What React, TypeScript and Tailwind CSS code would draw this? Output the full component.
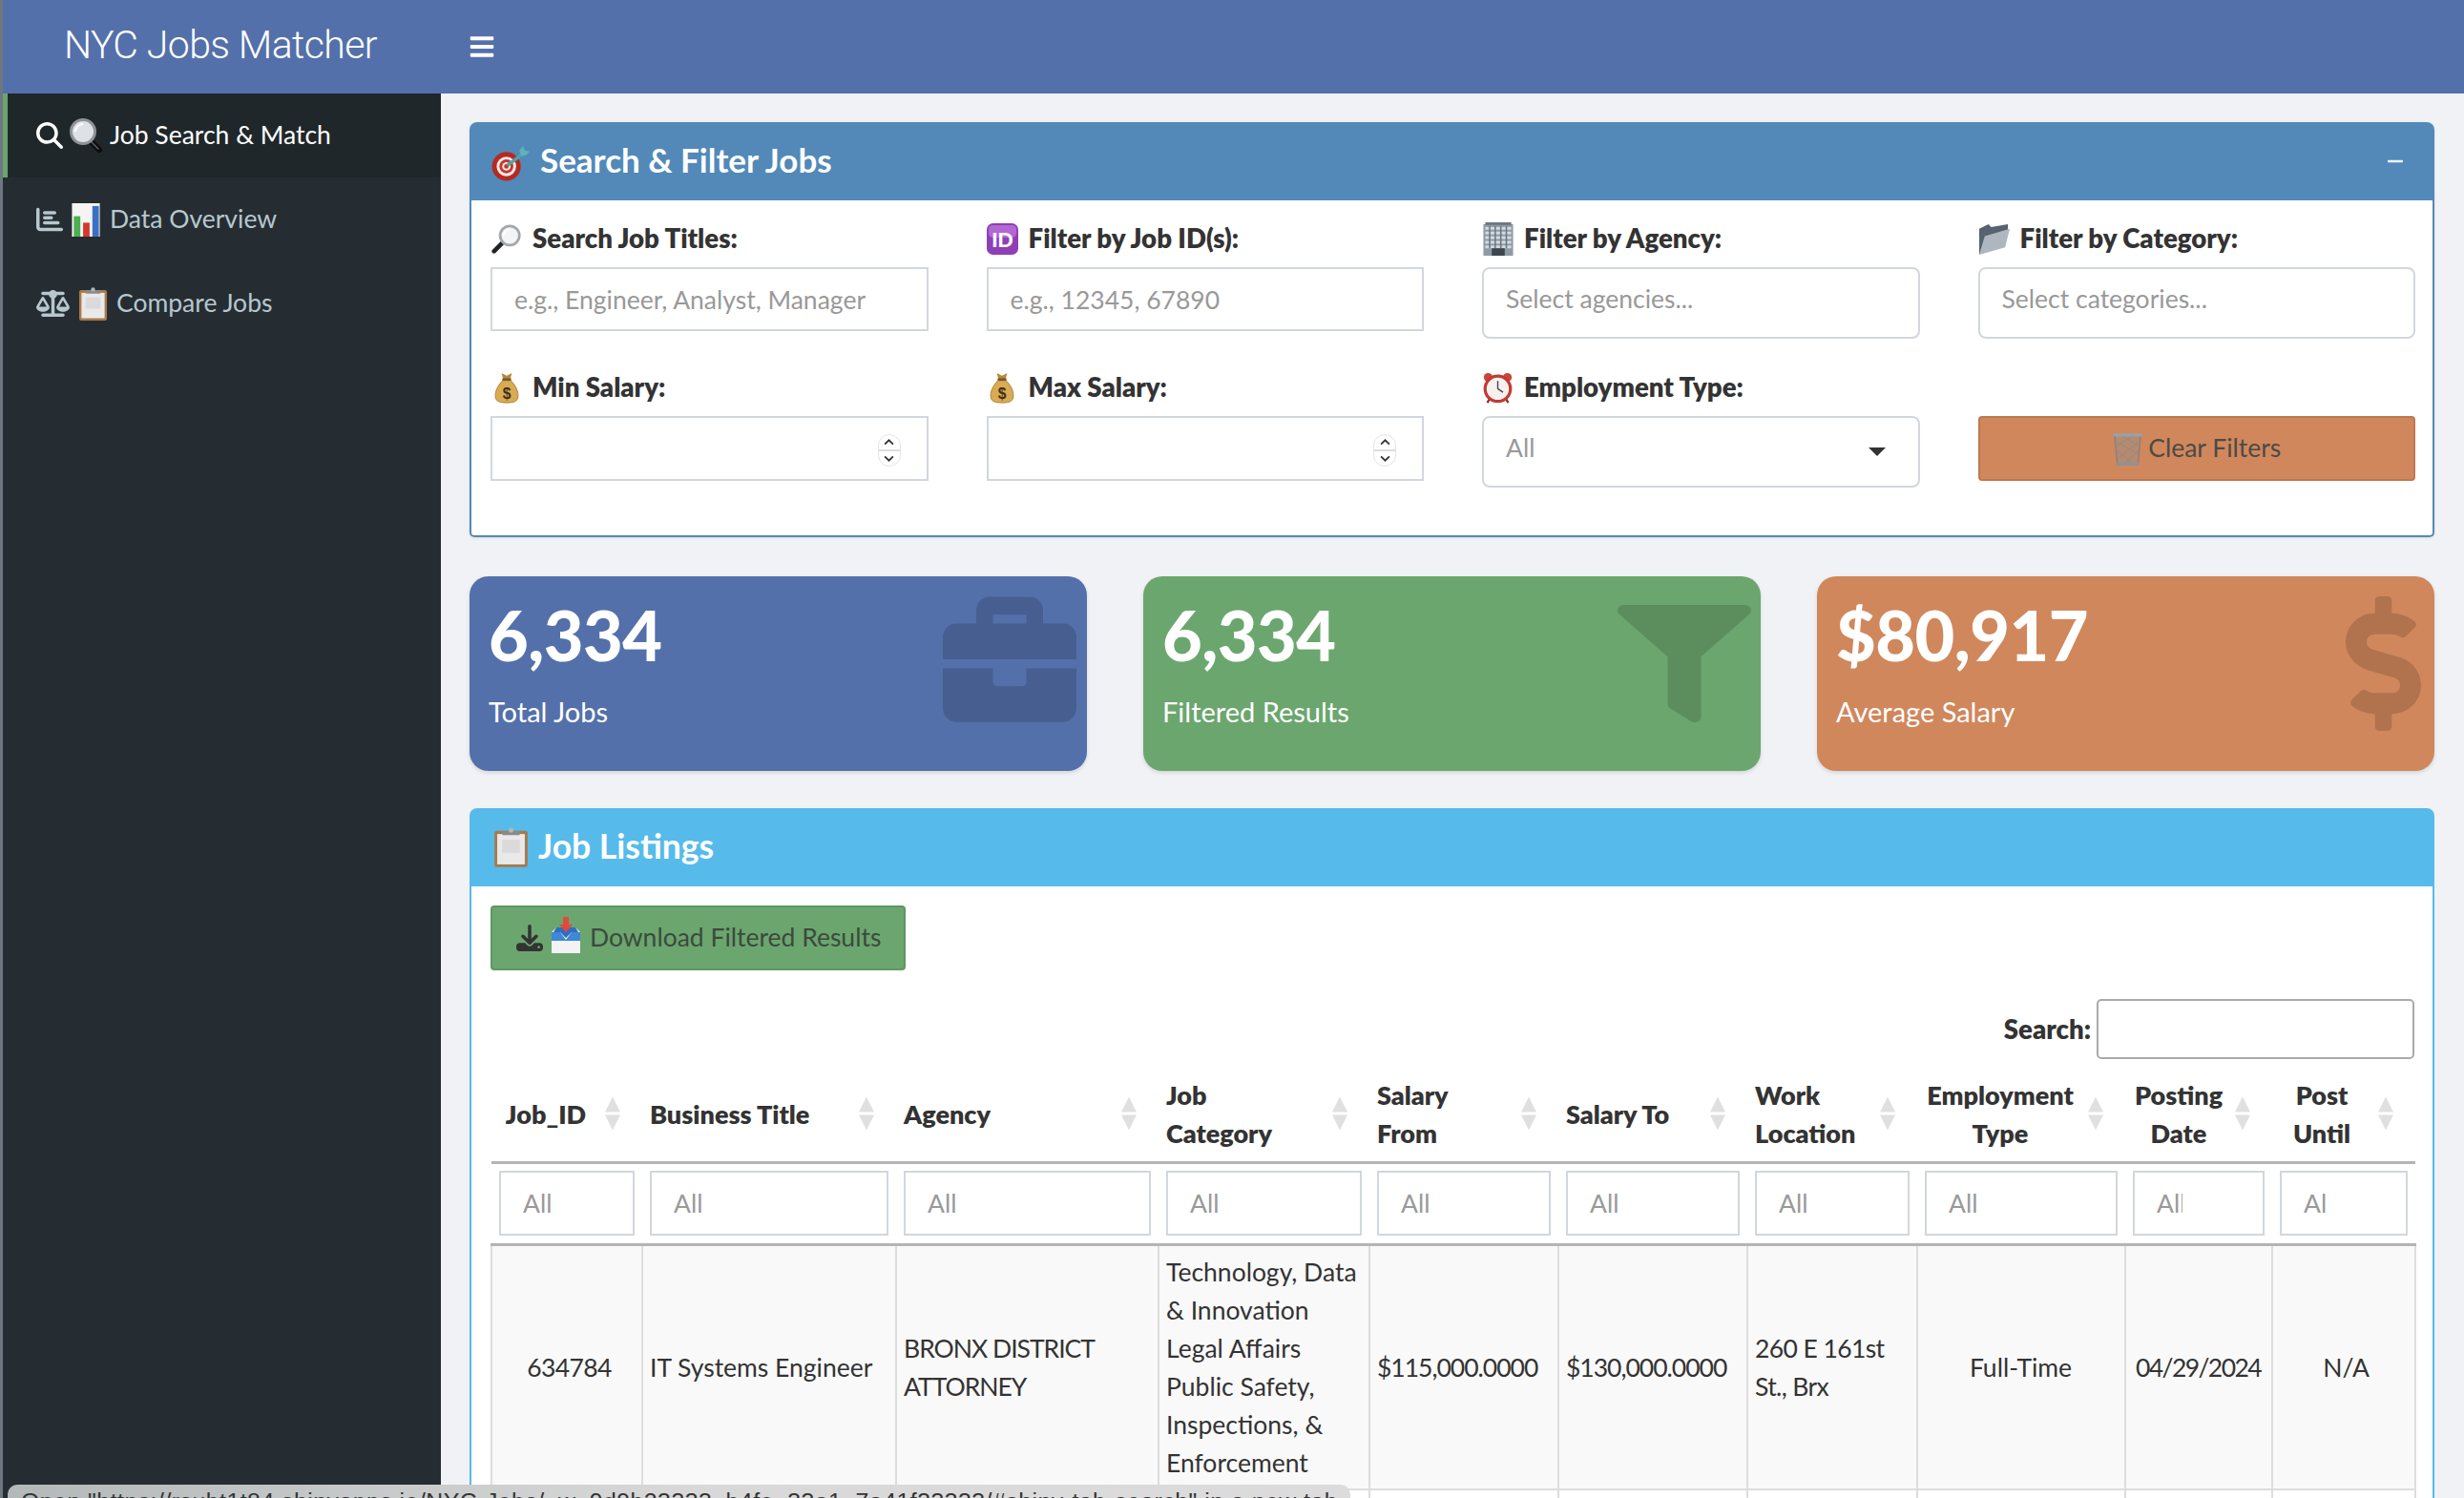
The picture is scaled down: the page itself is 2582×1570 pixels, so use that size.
import { ReactNode } from 'react';
import { FaBars, FaBriefcase, FaDollarSign, FaFilter } from 'react-icons/fa';
import { FaChartBar, FaDownload, FaMagnifyingGlass, FaMinus, FaScaleBalanced } from 'react-icons/fa6';

function GlassLeft({ className }: { className?: string }) {
  return (
    <svg viewBox="0 0 36 36" className={className}>
      <line x1="22" y1="23" x2="32" y2="33" stroke="#0c0c0c" strokeWidth="6" strokeLinecap="round" />
      <line x1="22" y1="23" x2="31" y2="32" stroke="#5b5f63" strokeWidth="1.5" strokeLinecap="round" />
      <circle cx="15" cy="14" r="12.5" fill="#dfe2e5" stroke="#8f9398" strokeWidth="3" />
      <path d="M7 14a8 8 0 0 1 8-8" stroke="#fff" strokeWidth="2" fill="none" />
    </svg>
  );
}

function GlassRight({ className }: { className?: string }) {
  return (
    <svg viewBox="0 0 36 36" className={className}>
      <line x1="14" y1="22" x2="4" y2="32" stroke="#222" strokeWidth="5" strokeLinecap="round" />
      <circle cx="22" cy="14" r="11" fill="#f2f4f6" stroke="#a4a8ad" strokeWidth="3" />
      <path d="M15 14a7 7 0 0 1 7-7" stroke="#fff" strokeWidth="2" fill="none" />
    </svg>
  );
}

function Bars({ className }: { className?: string }) {
  return (
    <svg viewBox="0 0 30 36" className={className}>
      <rect x="0" y="0" width="30" height="36" fill="#f4f4f4" />
      <rect x="2" y="14" width="7" height="22" fill="#4caf50" />
      <rect x="12" y="21" width="7" height="15" fill="#d23a2e" />
      <rect x="22" y="3" width="7" height="33" fill="#3b6fc4" />
    </svg>
  );
}

function Clipboard({ className }: { className?: string }) {
  return (
    <svg viewBox="0 0 32 36" className={className}>
      <rect x="1" y="3" width="30" height="33" rx="2" fill="#a9794a" />
      <rect x="3.5" y="6" width="25" height="27.5" fill="#e9e9e9" />
      <rect x="8" y="11" width="16" height="12" fill="#dadada" />
      <rect x="8" y="3" width="16" height="4" rx="1" fill="#8a8a8a" />
      <circle cx="16" cy="2.5" r="2.2" fill="#b5b5b5" />
    </svg>
  );
}

function Target({ className }: { className?: string }) {
  return (
    <svg viewBox="0 0 42 38" className={className}>
      <circle cx="16" cy="22" r="15.5" fill="#b52a22" />
      <circle cx="16" cy="22" r="10.5" fill="#f3ece6" />
      <circle cx="16" cy="22" r="7.5" fill="#c9352b" />
      <circle cx="16" cy="22" r="4.5" fill="#f3ece6" />
      <circle cx="16" cy="22" r="2.5" fill="#c9352b" />
      <line x1="17" y1="21" x2="34" y2="8" stroke="#4fa3a8" strokeWidth="3.5" />
      <path d="M30 5l4-5 2 5 5 1-4 4-5 1z" fill="#5cb4b8" />
    </svg>
  );
}

function IdBadge({ className }: { className?: string }) {
  return (
    <svg viewBox="0 0 35 35" className={className}>
      <rect x="0" y="0" width="35" height="35" rx="7" fill="#8e3fb5" />
      <rect x="2" y="2" width="31" height="14" rx="5" fill="#b268d4" />
      <text x="17.5" y="27" textAnchor="middle" fontFamily="Liberation Sans, sans-serif" fontSize="24" fill="#fff">ID</text>
    </svg>
  );
}

function Building({ className }: { className?: string }) {
  return (
    <svg viewBox="0 0 32 36" className={className}>
      <rect x="0" y="2" width="32" height="34" fill="#8e9ba6" />
      <rect x="2" y="0" width="28" height="3" fill="#6f7880" />
      {[5, 10, 15, 20, 25].map((y) => (
        <rect key={y} x="2" y={y} width="28" height="3" fill="#d2d9df" />
      ))}
      {[6, 12, 18, 24].map((x) => (
        <rect key={x} x={x} y="4" width="1.5" height="24" fill="#66737e" />
      ))}
      <rect x="9" y="28" width="14" height="8" fill="#3e464d" />
    </svg>
  );
}

function Folder({ className }: { className?: string }) {
  return (
    <svg viewBox="0 0 34 34" className={className}>
      <path d="M1 34V6l10-5 3 3 18-3v10z" fill="#56626f" />
      <path d="M1 34l6-20 27-8-5 20z" fill="#aeb7c0" />
    </svg>
  );
}

function MoneyBag({ className }: { className?: string }) {
  return (
    <svg viewBox="0 0 28 36" className={className}>
      <path d="M8 1l6 3 6-3-2 7h-8z" fill="#b8893c" />
      <path d="M10 9h8c5 5 9 11 9 18 0 6-4 8-13 8S1 33 1 27C1 20 5 14 10 9z" fill="#d9ab52" stroke="#a97c30" strokeWidth="1" />
      <rect x="9" y="7" width="10" height="3" fill="#7a5a24" />
      <text x="14" y="30" textAnchor="middle" fontFamily="Liberation Sans, sans-serif" fontWeight="700" fontSize="17" fill="#3c2f16">$</text>
    </svg>
  );
}

function AlarmClock({ className }: { className?: string }) {
  return (
    <svg viewBox="0 0 36 36" className={className}>
      <circle cx="7" cy="6" r="5" fill="#c9453c" />
      <circle cx="29" cy="6" r="5" fill="#c9453c" />
      <line x1="9" y1="30" x2="6" y2="35" stroke="#8c2f29" strokeWidth="2.5" />
      <line x1="27" y1="30" x2="30" y2="35" stroke="#8c2f29" strokeWidth="2.5" />
      <circle cx="18" cy="19" r="14.5" fill="#f6f1ee" stroke="#c23b32" strokeWidth="3.5" />
      <path d="M18 10v9l6 4" stroke="#444" strokeWidth="1.5" fill="none" />
    </svg>
  );
}

function Wastebasket({ className }: { className?: string }) {
  return (
    <svg viewBox="0 0 34 36" className={className}>
      <path d="M3 3h28l-3 32H6z" fill="#b78a6e" stroke="#87827e" strokeWidth="1.5" />
      <path d="M5 10l24 14M29 10L7 28M6 20l16 14M28 20L14 34M11 4l17 10M23 4L5 15" stroke="#8f8a86" strokeWidth="1" fill="none" />
      <rect x="1" y="1" width="32" height="3.5" rx="1.5" fill="#9aa0a6" />
      <rect x="5" y="33" width="24" height="3" rx="1" fill="#8d9398" />
    </svg>
  );
}

function Inbox({ className }: { className?: string }) {
  return (
    <svg viewBox="0 0 34 38" className={className}>
      <path d="M2 16l5-5h20l5 5v22H2z" fill="#f1f3f5" />
      <path d="M2 16h9l6 8 6-8h9v9H2z" fill="#3f87d8" />
      <path d="M7 11h20l3 5h-7l-6 6-6-6H4z" fill="#2f6fbd" />
      <path d="M14 0h6v8h4l-7 8-7-8h4z" fill="#e4483c" />
    </svg>
  );
}

function Label({ icon, text }: { icon: ReactNode; text: string }) {
  return (
    <div className="flex items-center gap-[11px] h-[36px] mb-[12px] font-extrabold text-[#333] text-[27.6px]">
      <span className="w-[33px] h-[36px] flex items-center justify-center">{icon}</span>
      <span>{text}</span>
    </div>
  );
}

function Spinner() {
  return (
    <div className="absolute right-[27px] top-[17px] w-[24px] h-[34px] rounded-full bg-white border border-[#e4e4e4] flex flex-col items-center justify-between py-[4px]">
      <svg viewBox="0 0 10 6" className="w-[11px] h-[7px]"><path d="M1 5l4-4 4 4" fill="none" stroke="#333" strokeWidth="1.6" /></svg>
      <div className="w-full h-[2px] bg-[#ddd]" />
      <svg viewBox="0 0 10 6" className="w-[11px] h-[7px]"><path d="M1 1l4 4 4-4" fill="none" stroke="#333" strokeWidth="1.6" /></svg>
    </div>
  );
}

function NumberField() {
  return (
    <div className="relative h-[68px] bg-white border-2 border-[#d2d6de]">
      <Spinner />
    </div>
  );
}

const textInput = 'w-full h-[67px] px-[23px] bg-white border-2 border-[#d2d6de] outline-none text-[26.5px] placeholder:text-[#999]';
const selectBox = 'w-full h-[75px] px-[23px] pb-[8px] flex items-center bg-white border-2 border-[#d2d6de] rounded-[8px] text-[26.5px] text-[#999]';

function Stat({ color, value, label, icon }: { color: string; value: string; label: string; icon: ReactNode }) {
  return (
    <div className={`relative h-[204px] pl-[20px] rounded-[20px] shadow-[0_2px_4px_rgba(0,0,0,0.12)] text-white ${color}`}>
      <div className="pt-[26px] h-[94px] leading-[70px] text-[72px] font-black tracking-[-0.5px]">{value}</div>
      <div className="mt-[28px] text-[29px] leading-[40px]">{label}</div>
      {icon}
    </div>
  );
}

const columns = [
  { label: ['Job_ID'], width: 'w-[158px]', head: 'text-center pr-[52px]', filter: 'pr-[4px]' },
  { label: ['Business Title'], width: 'w-[266px]', head: 'text-left pr-[30px]', filter: 'pr-[4px]' },
  { label: ['Agency'], width: 'w-[275px]', head: 'text-left pr-[30px]', filter: 'pr-[4px]' },
  { label: ['Job', 'Category'], width: 'w-[221px]', head: 'text-left pr-[30px]', filter: 'pr-[4px]' },
  { label: ['Salary', 'From'], width: 'w-[198px]', head: 'text-left pr-[30px]', filter: 'pr-[4px]' },
  { label: ['Salary To'], width: 'w-[198px]', head: 'text-left pr-[30px]', filter: 'pr-[4px]' },
  { label: ['Work', 'Location'], width: 'w-[178px]', head: 'text-left pr-[30px]', filter: 'pr-[4px]' },
  { label: ['Employment', 'Type'], width: 'w-[218px]', head: 'text-center pr-[52px]', filter: 'pr-[4px]' },
  { label: ['Posting', 'Date'], width: 'w-[154px]', head: 'text-center pr-[50px]', filter: 'pr-[84px]' },
  { label: ['Post', 'Until'], width: 'w-[150px]', head: 'text-center pr-[54px]', filter: 'pr-[84px]' },
];

const rowCells: { lines: string[]; cls: string }[] = [
  { lines: ['634784'], cls: 'text-center tracking-[-0.6px]' },
  { lines: ['IT Systems Engineer'], cls: 'text-left' },
  { lines: ['BRONX DISTRICT', 'ATTORNEY'], cls: 'text-left tracking-[-1px]' },
  { lines: ['Technology, Data', '& Innovation', 'Legal Affairs', 'Public Safety,', 'Inspections, &', 'Enforcement'], cls: 'text-left' },
  { lines: ['$115,000.0000'], cls: 'text-left tracking-[-1px]' },
  { lines: ['$130,000.0000'], cls: 'text-left tracking-[-1px]' },
  { lines: ['260 E 161st', 'St., Brx'], cls: 'text-left tracking-[-0.6px]' },
  { lines: ['Full-Time'], cls: 'text-center pr-[8px]' },
  { lines: ['04/29/2024'], cls: 'text-center tracking-[-1.6px] pr-[8px]' },
  { lines: ['N/A'], cls: 'text-center' },
];

function SortArrows() {
  return (
    <div className="absolute right-[23px] top-1/2 -translate-y-1/2 flex flex-col gap-[3px]">
      <div className="w-0 h-0 border-x-[8px] border-x-transparent border-b-[16px] border-b-[#e0e0e0]" />
      <div className="w-0 h-0 border-x-[8px] border-x-transparent border-t-[16px] border-t-[#e0e0e0]" />
    </div>
  );
}

export default function App() {
  return (
    <div className="relative h-[1570px] w-[2582px] overflow-hidden flex flex-col bg-[#f0f2f6] text-[#333] text-[26.5px] font-['Lato','Noto_Sans',sans-serif]">
      <div className="absolute left-0 top-0 bottom-0 w-[3px] bg-[#6e7680]" />

      <header className="h-[98px] shrink-0 flex items-center bg-[#5470aa] text-white">
        <div className="w-[462px] pl-[67px] -mt-[2px] font-['Roboto',sans-serif] font-light text-[41px] tracking-[-0.6px]">NYC Jobs Matcher</div>
        <div className="pl-[29px]"><FaBars className="w-[28px] h-[28px]" /></div>
      </header>

      <div className="flex flex-1 min-h-0">
        <aside className="w-[462px] shrink-0 bg-[#252d33] text-[#b8c7ce]">
          <div className="h-[88px] flex items-center pl-[38px] bg-[#1f272a] text-white border-l-[5px] border-l-[#6aa56d] ml-[3px]">
            <FaMagnifyingGlass className="w-[28px] h-[28px] -ml-[8px]" />
            <GlassLeft className="w-[36px] h-[36px] ml-[6px]" />
            <span className="ml-[7px]">Job Search &amp; Match</span>
          </div>
          <div className="h-[88px] flex items-center pl-[38px]">
            <FaChartBar className="w-[28px] h-[28px]" />
            <Bars className="w-[30px] h-[35px] ml-[9px]" />
            <span className="ml-[10px]">Data Overview</span>
          </div>
          <div className="h-[88px] flex items-center pl-[38px]">
            <FaScaleBalanced className="w-[35px] h-[28px]" />
            <Clipboard className="w-[31px] h-[35px] ml-[9px]" />
            <span className="ml-[9px]">Compare Jobs</span>
          </div>
        </aside>

        <main className="flex-1 min-w-0 pl-[30px] pr-[31px] pt-[30px]">
          <section className="rounded-t-[8px] rounded-b-[5px] bg-white shadow-[0_1px_3px_rgba(0,0,0,0.1)]">
            <div className="h-[82px] flex items-center justify-between bg-[#5289b8] rounded-t-[8px] pl-[23px] pr-[31px] text-white">
              <div className="flex items-center gap-[10px]">
                <Target className="w-[41px] h-[37px] mt-[4px]" />
                <span className="text-[35px] font-bold leading-none -mt-[4px]">Search &amp; Filter Jobs</span>
              </div>
              <FaMinus className="w-[20px] h-[20px] opacity-90" />
            </div>
            <div className="h-[353px] border-2 border-t-0 border-[#5289b8] rounded-b-[5px] pl-[20px] pr-[18px] pt-[22px] grid grid-cols-4 gap-x-[61px] grid-rows-[156px_auto]">
              <div>
                <Label icon={<GlassRight className="w-[33px] h-[33px]" />} text="Search Job Titles:" />
                <input className={textInput} placeholder="e.g., Engineer, Analyst, Manager" />
              </div>
              <div>
                <Label icon={<IdBadge className="w-[33px] h-[33px]" />} text="Filter by Job ID(s):" />
                <input className={textInput} placeholder="e.g., 12345, 67890" />
              </div>
              <div>
                <Label icon={<Building className="w-[32px] h-[35px]" />} text="Filter by Agency:" />
                <div className={selectBox}>Select agencies...</div>
              </div>
              <div>
                <Label icon={<Folder className="w-[33px] h-[33px]" />} text="Filter by Category:" />
                <div className={selectBox}>Select categories...</div>
              </div>
              <div>
                <Label icon={<MoneyBag className="w-[26px] h-[33px]" />} text="Min Salary:" />
                <NumberField />
              </div>
              <div>
                <Label icon={<MoneyBag className="w-[26px] h-[33px]" />} text="Max Salary:" />
                <NumberField />
              </div>
              <div>
                <Label icon={<AlarmClock className="w-[35px] h-[35px]" />} text="Employment Type:" />
                <div className={`${selectBox} justify-between`}>
                  <span>All</span>
                  <div className="w-0 h-0 mt-[8px] mr-[11px] border-x-[9px] border-x-transparent border-t-[9px] border-t-[#333]" />
                </div>
              </div>
              <div className="pt-[48px]">
                <button className="w-full h-[68px] flex items-center justify-center gap-[5px] bg-[#d0875c] border-2 border-[#bd7850] rounded-[4px] text-[#4d4a47]">
                  <Wastebasket className="w-[33px] h-[35px]" />
                  <span>Clear Filters</span>
                </button>
              </div>
            </div>
          </section>

          <div className="mt-[41px] grid grid-cols-3 gap-x-[59px]">
            <Stat color="bg-[#5470aa]" value="6,334" label="Total Jobs" icon={<FaBriefcase preserveAspectRatio="none" className="absolute left-[496px] top-[12px] w-[140px] h-[150px] text-black/15" />} />
            <Stat color="bg-[#6ba66e]" value="6,334" label="Filtered Results" icon={<FaFilter preserveAspectRatio="none" className="absolute right-[10px] top-[30px] w-[140px] h-[123px] text-black/15" />} />
            <Stat color="bg-[#d0875c]" value="$80,917" label="Average Salary" icon={<FaDollarSign preserveAspectRatio="none" className="absolute right-[14px] top-[21px] w-[79px] h-[141px] text-black/15" />} />
          </div>

          <section className="mt-[39px] rounded-t-[8px] bg-white">
            <div className="h-[82px] flex items-center gap-[10px] bg-[#56bbeb] rounded-t-[8px] pl-[25px] text-white">
              <Clipboard className="w-[37px] h-[42px]" />
              <span className="text-[35.5px] font-bold leading-none -mt-[2px]">Job Listings</span>
            </div>
            <div className="border-x-2 border-[#56bbeb] pl-[20px] pr-[19px] pt-[20px] h-[800px]">
              <button className="w-[435px] h-[68px] flex items-center pl-[25px] bg-[#6ba66e] border-2 border-[#5f9763] rounded-[4px] text-[#3c4a3d]">
                <FaDownload className="w-[28px] h-[28px] text-[#333]" />
                <Inbox className="w-[34px] h-[38px] ml-[7px] -mt-[6px]" />
                <span className="ml-[8px]">Download Filtered Results</span>
              </button>

              <div className="mt-[30px] h-[63px] flex items-center justify-end gap-[6px]">
                <label className="font-extrabold text-[27.6px]">Search:</label>
                <input className="w-[333px] h-[63px] border-2 border-[#aaa] rounded-[5px] outline-none bg-white" />
              </div>

              <table className="mt-[8px] w-[2016px] table-fixed border-collapse">
                <colgroup>
                  {columns.map((c) => <col key={c.label[0] + c.width} className={c.width} />)}
                </colgroup>
                <thead>
                  <tr className="h-[100px] border-b-[3px] border-b-[#b4b4b4]">
                    {columns.map((c) => (
                      <th key={c.label.join()} className={`relative pl-[8px] pt-[2px] font-extrabold text-[27px] leading-[40px] ${c.head}`}>
                        {c.label.map((l) => <div key={l} className="whitespace-nowrap">{l}</div>)}
                        <SortArrows />
                      </th>
                    ))}
                  </tr>
                  <tr className="h-[86px] border-b-[3px] border-b-[#b4b4b4]">
                    {columns.map((c) => (
                      <th key={c.label.join()} className="px-[8px] font-normal">
                        <input className={`w-full h-[68px] pl-[23px] border-2 border-[#d2d6de] outline-none bg-white placeholder:text-[#999] ${c.filter}`} placeholder="All" />
                      </th>
                    ))}
                  </tr>
                </thead>
                <tbody>
                  <tr className="h-[257px] bg-[#f9f9f9]">
                    {rowCells.map((cell, i) => (
                      <td key={i} className={`border-2 border-[#ddd] pl-[7px] pr-[2px] leading-[40px] whitespace-nowrap ${cell.cls}`}>
                        {cell.lines.map((l) => <div key={l}>{l}</div>)}
                      </td>
                    ))}
                  </tr>
                  <tr className="h-[60px]">
                    {rowCells.map((_, i) => <td key={i} className="border-2 border-[#ddd]" />)}
                  </tr>
                </tbody>
              </table>
            </div>
          </section>
        </main>
      </div>

      <div className="absolute left-[8px] top-[1556px] w-[1407px] h-[40px] rounded-t-[10px] overflow-hidden pl-[14px] pt-[6px] bg-gradient-to-r from-[#b3b8b9] via-[#d8d8d8] to-[#dcdcdc] text-[#333] text-[24.8px] tracking-[0.5px] leading-[24px] whitespace-nowrap font-['Liberation_Sans',sans-serif]">
        Open "https://rsubt1t84.shinyapps.io/NYC-Jobs/_w_9d9b23333_b4fe_33a1_7a41f33333/#shiny-tab-search" in a new tab
      </div>
    </div>
  );
}
